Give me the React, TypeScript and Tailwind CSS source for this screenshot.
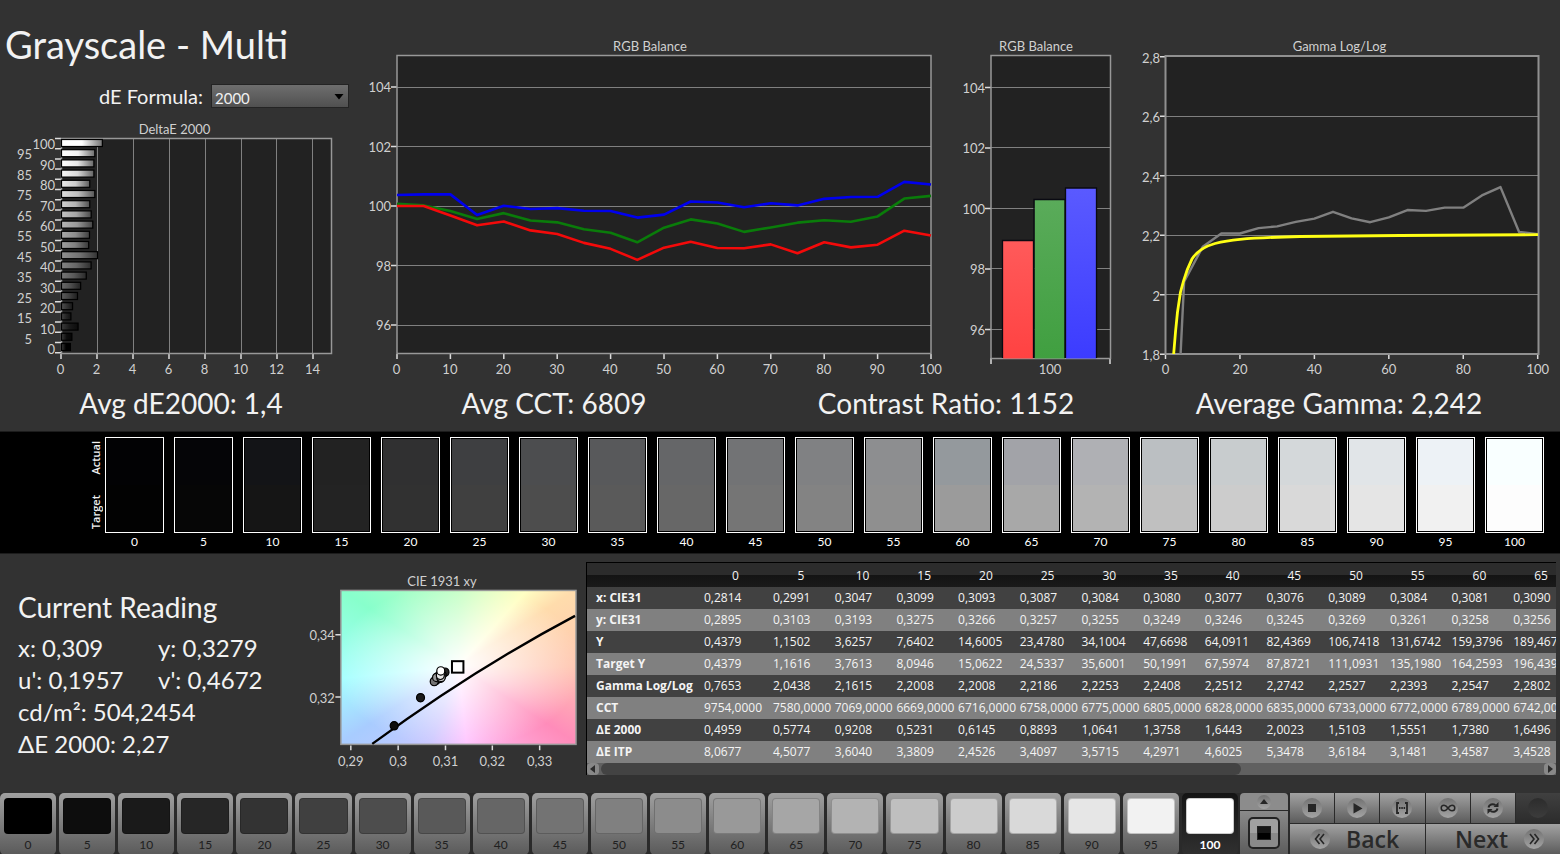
import React from "react";

const LEVELS = Array.from({ length: 21 }, (_, i) => i * 5);

const DELTA_E = [
  0.4959, 0.5774, 0.9208, 0.5231, 0.6145, 0.8893, 1.0641, 1.3758, 1.6443, 2.0023, 1.5103, 1.5551, 1.738, 1.6496, 1.57,
  1.85, 1.57, 1.8, 1.8, 1.85, 2.27,
];

const BLUE = [
  100.37, 100.39, 100.39, 99.7, 100.01, 99.9, 99.93, 99.84, 99.83, 99.61, 99.71, 100.15, 100.12, 99.96, 100.09, 100.02,
  100.24, 100.3, 100.31, 100.81, 100.72,
];
const GREEN = [
  100.07, 100.02, 99.83, 99.56, 99.76, 99.51, 99.45, 99.22, 99.1, 98.78, 99.27, 99.55, 99.41, 99.13, 99.28, 99.44,
  99.52, 99.47, 99.65, 100.25, 100.34,
];
const RED = [
  100, 100, 99.68, 99.35, 99.48, 99.18, 99.06, 98.76, 98.56, 98.19, 98.6, 98.8, 98.59, 98.58, 98.71, 98.41, 98.78,
  98.61, 98.7, 99.17, 99.01,
];

const GAMMA = [
  0.7653, 2.0438, 2.1615, 2.206, 2.206, 2.224, 2.23, 2.245, 2.256, 2.279, 2.257, 2.244, 2.26, 2.285,
  2.282, 2.293, 2.293, 2.334, 2.362, 2.211, 2.204,
];

const ROWS: { label: string; cells: string }[] = [
  { label: "x: CIE31", cells: "0,2814 0,2991 0,3047 0,3099 0,3093 0,3087 0,3084 0,3080 0,3077 0,3076 0,3089 0,3084 0,3081 0,3090" },
  { label: "y: CIE31", cells: "0,2895 0,3103 0,3193 0,3275 0,3266 0,3257 0,3255 0,3249 0,3246 0,3245 0,3269 0,3261 0,3258 0,3256" },
  { label: "Y", cells: "0,4379 1,1502 3,6257 7,6402 14,6005 23,4780 34,1004 47,6698 64,0911 82,4369 106,7418 131,6742 159,3796 189,4679" },
  { label: "Target Y", cells: "0,4379 1,1616 3,7613 8,0946 15,0622 24,5337 35,6001 50,1991 67,5974 87,8721 111,0931 135,1980 164,2593 196,4390" },
  { label: "Gamma Log/Log", cells: "0,7653 2,0438 2,1615 2,2008 2,2008 2,2186 2,2253 2,2408 2,2512 2,2742 2,2527 2,2393 2,2547 2,2802" },
  { label: "CCT", cells: "9754,0000 7580,0000 7069,0000 6669,0000 6716,0000 6758,0000 6775,0000 6805,0000 6828,0000 6835,0000 6733,0000 6772,0000 6789,0000 6742,0000" },
  { label: "ΔE 2000", cells: "0,4959 0,5774 0,9208 0,5231 0,6145 0,8893 1,0641 1,3758 1,6443 2,0023 1,5103 1,5551 1,7380 1,6496" },
  { label: "ΔE ITP", cells: "8,0677 4,5077 3,6040 3,3809 2,4526 3,4097 3,5715 4,2971 4,6025 5,3478 3,6184 3,1481 3,4587 3,4528" },
];

const SWATCHES: [string, string][] = [
  ["#020204", "#020202"], ["#050507", "#060606"], ["#131417", "#151515"], ["#222222", "#232323"],
  ["#303031", "#313131"], ["#3e3f41", "#404040"], ["#4c4d4f", "#4d4d4d"], ["#58595b", "#5a5a5a"],
  ["#656668", "#676767"], ["#727375", "#757575"], ["#808183", "#838383"], ["#8d8e90", "#8f8f8f"],
  ["#94999d", "#9b9b9b"], ["#a2a3a8", "#a8a8a8"], ["#afb0b4", "#b3b3b3"], ["#bbbfc2", "#c0c0c0"],
  ["#c8ccce", "#cccccc"], ["#d4d8da", "#d9d9d9"], ["#e1e5e8", "#e5e5e5"], ["#edf2f6", "#f1f1f1"],
  ["#f9ffff", "#fdfdfd"],
];

const grayOf = (level: number) => {
  const v = Math.round((level / 100) * 255);
  return `rgb(${v},${v},${v})`;
};

type LabelProps = { x: number; y: number; anchor?: "start" | "middle" | "end"; children: React.ReactNode };

function AxisText({ x, y, anchor = "middle", children }: LabelProps) {
  return (
    <text x={x} y={y + 5} textAnchor={anchor} fontSize="13" fill="#d0d0d0">
      {children}
    </text>
  );
}

function Grid({ d }: { d: string }) {
  return <path d={d} stroke="#808080" fill="none" shapeRendering="crispEdges" />;
}

function Ticks({ d }: { d: string }) {
  return <path d={d} stroke="#dcdcdc" strokeWidth="1.5" fill="none" />;
}

function Frame({ x, y, w, h }: { x: number; y: number; w: number; h: number }) {
  return <rect x={x} y={y} width={w} height={h} fill="none" stroke="#989898" strokeWidth="1.5" />;
}

function DeltaChart() {
  const xs = [0, 2, 4, 6, 8, 10, 12, 14];
  return (
    <svg viewBox="0 118 360 267" className="block w-full" role="img" aria-label="DeltaE 2000">
      <defs>
        {LEVELS.map((l) => {
          const lit = Math.max(60, l * 2.55 + 30);
          return (
            <linearGradient key={l} id={`de${l}`}>
              <stop offset="0" stopColor={l > 85 ? "#fff" : `rgb(${lit},${lit},${lit})`} />
              <stop offset="0.5" stopColor={grayOf(l)} />
              <stop offset="1" stopColor={grayOf(l * 0.45)} />
            </linearGradient>
          );
        })}
      </defs>
      <AxisText x={174.5} y={129}>DeltaE 2000</AxisText>
      <rect x="61" y="138" width="270" height="215" fill="#222" />
      <Grid d={xs.slice(1).map((v) => `M${Math.round(61 + v * 17.95) + 0.5} 138V353`).join("")} />
      <Ticks d={xs.map((v) => `M${61 + v * 18} 354v5`).join("") + Array.from({ length: 22 }, (_, k) => `M55 ${138.5 + k * 10.2}h6`).join("")} />
      <Frame x={61.5} y={138.5} w={270} h={215} />
      {LEVELS.map((l, i) => (
        <rect key={l} x="61.5" y={343.5 - i * 10.2} width={DELTA_E[i] * 18} height="7" fill={`url(#de${l})`} stroke="#000" strokeWidth="1.2" />
      ))}
      {LEVELS.map((l, i) => (
        <AxisText key={l} x={i % 2 ? 32 : 55} y={349 - i * 10.25} anchor="end">{l}</AxisText>
      ))}
      {xs.map((v) => (
        <AxisText key={v} x={60.5 + v * 18} y={369}>{v}</AxisText>
      ))}
    </svg>
  );
}

function RgbLineChart() {
  const px = (i: number) => 397 + i * 26.7;
  const py = (v: number) => 206 - (v - 100) * 29.75;
  const line = (data: number[]) => data.map((v, i) => `${px(i)},${py(v)}`).join(" ");
  const ys = [96, 98, 100, 102, 104];
  const xs = Array.from({ length: 11 }, (_, i) => i * 10);
  return (
    <svg viewBox="360 35 590 350" className="block w-full" role="img" aria-label="RGB Balance by level">
      <AxisText x={650} y={46}>RGB Balance</AxisText>
      <rect x="397" y="56" width="534" height="298" fill="#222" />
      <Grid d={ys.map((v) => `M397 ${Math.floor(py(v)) + 0.5}H931`).join("")} />
      <Ticks d={ys.map((v) => `M391 ${py(v)}h6`).join("") + xs.map((v) => `M${397 + v * 5.34} 354v5`).join("")} />
      <Frame x={397} y={55.5} w={534} h={298} />
      <g fill="none" strokeWidth="2.6" strokeLinejoin="round">
        <polyline points={line(BLUE)} stroke="#0000ee" />
        <polyline points={line(GREEN)} stroke="#0a7c0a" />
        <polyline points={line(RED)} stroke="#f40a0a" />
      </g>
      {ys.map((v) => (
        <AxisText key={v} x={391} y={py(v)} anchor="end">{v}</AxisText>
      ))}
      {xs.map((v) => (
        <AxisText key={v} x={396.5 + v * 5.34} y={369}>{v}</AxisText>
      ))}
    </svg>
  );
}

function RgbBarChart() {
  const py = (v: number) => 208.5 - (v - 100) * 30.25;
  const ys = [96, 98, 100, 102, 104];
  const bars = [
    { x: 1003, top: 240.5, from: "#ff5a5a", to: "#ff4242" },
    { x: 1034.5, top: 199.5, from: "#5aab5a", to: "#409f40" },
    { x: 1066, top: 188, from: "#5a5aff", to: "#3c3cff" },
  ];
  return (
    <svg viewBox="950 35 175 350" className="block w-full" role="img" aria-label="RGB Balance at level 100">
      <defs>
        {bars.map((b) => (
          <linearGradient key={b.x} id={`bar${b.x}`} x1="0" y1="0" x2="0" y2="1">
            <stop offset="0" stopColor={b.from} />
            <stop offset="1" stopColor={b.to} />
          </linearGradient>
        ))}
      </defs>
      <AxisText x={1036} y={46}>RGB Balance</AxisText>
      <rect x="991" y="56" width="119" height="302" fill="#222" />
      <Grid d={ys.map((v) => `M991 ${Math.floor(py(v) - 0.3) + 0.5}H1110`).join("")} />
      <Ticks d={ys.map((v) => `M985 ${py(v)}h6`).join("") + "M991 358v6M1110 358v6"} />
      <Frame x={991} y={55.5} w={119.5} h={303} />
      {bars.map((b) => (
        <g key={b.x}>
          <rect x={b.x} y={b.top} width="30.5" height={358.5 - b.top} fill={`url(#bar${b.x})`} />
          <path d={`M${b.x - 0.5} 358V${b.top}h31V358`} fill="none" stroke="#0a0a12" strokeWidth="1.3" />
        </g>
      ))}
      {ys.map((v) => (
        <AxisText key={v} x={985} y={py(v)} anchor="end">{v}</AxisText>
      ))}
      <AxisText x={1050} y={369}>100</AxisText>
    </svg>
  );
}

function GammaChart() {
  const px = (v: number) => 1165.5 + v * 3.722;
  const py = (v: number) => 235.3 - (v - 2.2) * 297.5;
  const ys: [number, string][] = [[2.8, "2,8"], [2.6, "2,6"], [2.4, "2,4"], [2.2, "2,2"], [2, "2"], [1.8, "1,8"]];
  const xs = [0, 20, 40, 60, 80, 100];
  return (
    <svg viewBox="1125 35 435 350" className="block w-full" role="img" aria-label="Gamma Log/Log">
      <clipPath id="gamma-plot">
        <rect x="1166" y="56" width="372" height="298" />
      </clipPath>
      <AxisText x={1339.5} y={46}>Gamma Log/Log</AxisText>
      <rect x="1166" y="56" width="372" height="298" fill="#222" />
      <Grid d={[2.6, 2.4, 2.2, 2].map((v) => `M1166 ${Math.floor(py(v)) + 0.5}H1538`).join("")} />
      <Ticks d={ys.map(([v]) => `M1160 ${py(v)}h6`).join("") + xs.map((v) => `M${px(v)} 354v5`).join("")} />
      <rect x="1165.5" y="56" width="373" height="298" fill="none" stroke="#909090" strokeWidth="2" />
      <g clipPath="url(#gamma-plot)" fill="none" strokeLinejoin="round">
        <polyline points={GAMMA.map((v, i) => `${px(i * 5)},${py(v)}`).join(" ")} stroke="#808080" strokeWidth="2.4" />
        <path
          d="M1173.5 356L1175.5 332L1177.5 312L1180.5 292L1183.5 281Q1187 269 1192 259Q1199 248 1215 243.500Q1226 240.500 1240 239.300Q1262 237.500 1300 236.500L1400 235.500L1538 234.700"
          stroke="#ffff14"
          strokeWidth="2.8"
        />
      </g>
      {ys.map(([v, t]) => (
        <AxisText key={t} x={1160} y={py(v) + 1} anchor="end">{t}</AxisText>
      ))}
      {xs.map((v) => (
        <AxisText key={v} x={px(v)} y={369}>{v}</AxisText>
      ))}
    </svg>
  );
}

const CIE_POINTS: [number, number, string][] = [
  [0.2991, 0.3103, "#0d0d0d"], [0.3047, 0.3193, "#1a1a1a"], [0.3099, 0.3275, "#262626"], [0.3093, 0.3266, "#333"],
  [0.3087, 0.3257, "#404040"], [0.3084, 0.3255, "#4d4d4d"], [0.308, 0.3249, "#595959"], [0.3077, 0.3246, "#666"],
  [0.3076, 0.3245, "#737373"], [0.3089, 0.3269, "#808080"], [0.3084, 0.3261, "#8c8c8c"], [0.3081, 0.3258, "#999"],
  [0.309, 0.3256, "#a6a6a6"], [0.3091, 0.3258, "#ccc"], [0.3089, 0.3265, "#e6e6e6"], [0.309, 0.3279, "#fff"],
];

function CieChart() {
  const xs: [number, string][] = [[351, "0,29"], [398.5, "0,3"], [446, "0,31"], [493, "0,32"], [540.5, "0,33"]];
  return (
    <svg viewBox="300 570 287 205" className="block w-full" role="img" aria-label="CIE 1931 xy">
      <AxisText x={442.5} y={581}>CIE 1931 xy</AxisText>
      <foreignObject x="341" y="591" width="236" height="154">
        <div className="h-full w-full bg-[radial-gradient(ellipse_farthest-side_at_50%_49%,#fff_0%,#fffc_22%,#fff0_105%),conic-gradient(from_0deg_at_50%_49%,#c4ffc4_0deg,#ffffc4_42deg,#ffdcac_57deg,#ffc6b0_90deg,#ff8cba_123deg,#ffa8dc_148deg,#ffc4ff_174deg,#ccc8ff_200deg,#a8ccff_237deg,#a4ffff_264deg,#88ffcc_303deg,#a4ffc8_325deg,#c4ffc4_360deg)]" />
      </foreignObject>
      <Frame x={341} y={590.5} w={236} h={154.5} />
      <Ticks d={xs.map(([x]) => `M${x} 746v5`).join("") + "M335.500 635h5.500M335.500 697.500h5.500"} />
      <path d="M372.500 744.500Q474 670 576 616" stroke="#000" strokeWidth="2.4" fill="none" />
      {CIE_POINTS.map(([x, y, fill]) => (
        <ellipse key={`${x}-${y}-${fill}`} cx={351.5 + (x - 0.29) * 4725} cy={633.5 + (0.34 - y) * 3125} rx="4" ry="4.200" fill={fill} stroke="#000" strokeWidth="1.200" />
      ))}
      <rect x="452.500" y="661.500" width="11.500" height="11.500" fill="#fff" stroke="#000" strokeWidth="2" />
      {xs.map(([x, t]) => (
        <AxisText key={t} x={x} y={761.5}>{t}</AxisText>
      ))}
      <AxisText x={335} y={635.5} anchor="end">0,34</AxisText>
      <AxisText x={335} y={698} anchor="end">0,32</AxisText>
    </svg>
  );
}

function ReadingsTable() {
  return (
    <div className="mr-1 mt-2 min-w-0 flex-1 self-start overflow-hidden border-t border-l border-black font-['Open_Sans','Noto_Sans',sans-serif] text-[12px] leading-4 text-[#f4f4f4]">
      <table className="w-[985px] table-fixed border-collapse">
        <colgroup>
          <col className="w-[114px]" />
          <col className="w-[69px]" />
        </colgroup>
        <thead>
          <tr className="h-6 bg-[linear-gradient(#2c2c2c_0%,#2c2c2c_50%,#141414_52%,#1a1a1a_100%)]">
            <th aria-label="Quantity" />
            {LEVELS.slice(0, 14).map((l) => (
              <th key={l} scope="col" className="p-0 pt-0.5 text-center font-normal">{l}</th>
            ))}
          </tr>
        </thead>
        <tbody>
          {ROWS.map((row) => (
            <tr key={row.label} className="h-[22px] odd:bg-[#414141] even:bg-[#808080]">
              <th scope="row" className="p-0 pl-[9px] text-left font-bold whitespace-nowrap">{row.label}</th>
              {row.cells.split(" ").map((c, i) => (
                <td key={i} className="p-0 pl-[3px] whitespace-nowrap">{c}</td>
              ))}
            </tr>
          ))}
        </tbody>
      </table>
      <div className="flex h-3 items-center bg-[#606060]">
        <button type="button" aria-label="Scroll left" className="flex h-3 w-3 items-center justify-center rounded-sm bg-[#888]">
          <svg viewBox="0 0 6 8" className="h-2 w-1.5" fill="#2c2c2c"><path d="M5 0v8L0 4z" /></svg>
        </button>
        <div className="mx-0.5 flex-1">
          <div className="h-3 w-[68%] rounded-md bg-[#434343]" />
        </div>
        <button type="button" aria-label="Scroll right" className="flex h-3 w-3 items-center justify-center rounded-sm bg-[#888]">
          <svg viewBox="0 0 6 8" className="h-2 w-1.5" fill="#2c2c2c"><path d="M1 0v8l5-4z" /></svg>
        </button>
      </div>
    </div>
  );
}

function Round({ children, size = "h-5 w-5" }: { children?: React.ReactNode; size?: string }) {
  return (
    <span className={`flex ${size} shrink-0 items-center justify-center rounded-full bg-[linear-gradient(#727272,#a4a4a4)]`}>
      {children}
    </span>
  );
}

const CONTROLS: { label: string; icon: React.ReactNode }[] = [
  { label: "Stop", icon: <path d="M6 6h8v8H6z" fill="#262626" /> },
  { label: "Play", icon: <path d="M6.500 5L15.500 10.500L6.500 15.500z" fill="#262626" /> },
  {
    label: "Measure range",
    icon: (
      <>
        <path d="M7 5H5v10h2M13 5h2v10h-2" fill="none" stroke="#262626" strokeWidth="1.800" />
        <path d="M7 10h1.500M9.300 10h1.500M11.600 10h1.500" stroke="#262626" strokeWidth="1.800" />
      </>
    ),
  },
  {
    label: "Continuous",
    icon: (
      <path
        d="M10 10C8.500 8 7.500 7.200 6 7.200a2.800 2.800 0 0 0 0 5.600C7.500 12.800 8.500 12 10 10S12.500 7.200 14 7.200a2.800 2.800 0 0 1 0 5.600C12.500 12.800 11.500 12 10 10z"
        fill="none"
        stroke="#262626"
        strokeWidth="1.500"
      />
    ),
  },
  {
    label: "Refresh",
    icon: (
      <g fill="none" stroke="#262626" strokeWidth="2">
        <path d="M5.500 9.500C6 6.500 9.500 5.200 12.500 7" />
        <path d="M14.500 10.500C14 13.500 10.500 14.800 7.500 13" />
        <path d="M15.500 4v5h-5zM4.500 16v-5h5z" fill="#262626" stroke="none" />
      </g>
    ),
  },
];

const KEY = "bg-[linear-gradient(#a2a2a2,#5c5c5c)]";

export default function App() {
  return (
    <main className="flex min-h-screen flex-col overflow-hidden bg-[#323232] font-[Lato,'Open_Sans',sans-serif] text-[#f2f2f2]">
      <section className="grid grid-cols-[360fr_590fr_175fr_435fr] items-end">
        <div>
          <h1 className="mt-5 pl-[5px] text-[38px] leading-[48px] whitespace-nowrap">Grayscale - Multi</h1>
          <div className="mt-4 mb-[10px] flex items-center justify-end gap-2 pr-[11px]">
            <label htmlFor="formula" className="text-[20px] leading-6">dE Formula:</label>
            <span className="relative flex">
              <select
                id="formula"
                className="h-6 w-[138px] appearance-none border border-[#242424] bg-[linear-gradient(#6e6e6e,#505050)] pt-[3px] pl-[3px] text-[15px] leading-5 text-[#f0f0f0]"
                defaultValue="2000"
              >
                <option value="2000">2000</option>
              </select>
              <svg viewBox="0 0 10 6" className="pointer-events-none absolute top-[10px] right-[5px] h-[6px] w-[10px]">
                <path d="M0.500 0h9L5 5.500z" fill="#000" />
              </svg>
            </span>
          </div>
          <DeltaChart />
        </div>
        <RgbLineChart />
        <RgbBarChart />
        <GammaChart />
      </section>

      <section className="grid h-[46px] grid-cols-[362fr_384fr_400fr_386fr_28fr] text-center text-[28px] leading-9 whitespace-nowrap">
        <p>Avg dE2000: 1,4</p>
        <p>Avg CCT: 6809</p>
        <p>Contrast Ratio: 1152</p>
        <p>Average Gamma: 2,242</p>
      </section>

      <section className="flex h-[123px] border-y border-[#1c1c1c] bg-black pt-[5px] pr-4 text-[12px]">
        <div className="flex h-24 w-[105px] flex-col items-end justify-between pt-1 pr-0.5 pb-1 font-['Open_Sans',sans-serif] text-[11px] leading-[14px] font-semibold">
          <span className="rotate-180 [writing-mode:vertical-rl]">Actual</span>
          <span className="rotate-180 [writing-mode:vertical-rl]">Target</span>
        </div>
        <ul className="grid flex-1 grid-cols-21 gap-[10px]">
          {LEVELS.map((l, i) => (
            <li key={l} className="text-center">
              <div className="flex h-24 flex-col border border-white">
                <div className="flex flex-1 flex-col border border-black/20">
                  <span className="flex-1" style={{ background: SWATCHES[i][0] }} />
                  <span className="flex-1" style={{ background: SWATCHES[i][1] }} />
                </div>
              </div>
              <span className="block leading-[18px] text-white">{l}</span>
            </li>
          ))}
        </ul>
      </section>

      <section className="flex flex-1">
        <div className="w-[300px] pt-[35px] pl-[18px] text-[24px] leading-8 whitespace-nowrap">
          <h2 className="mb-[7px] text-[28px] leading-9">Current Reading</h2>
          <dl className="grid grid-cols-[140px_1fr]">
            <div>x: 0,309</div>
            <div>y: 0,3279</div>
            <div>u': 0,1957</div>
            <div>v': 0,4672</div>
            <div className="col-span-2">cd/m²: 504,2454</div>
            <div className="col-span-2">ΔE 2000: 2,27</div>
          </dl>
        </div>
        <div className="w-[286px] pt-4">
          <CieChart />
        </div>
        <ReadingsTable />
      </section>

      <footer className="flex h-[61px] bg-[#2a2a2a]">
        <div className="grid flex-1 grid-cols-21 gap-[3px]">
          {LEVELS.map((l) => {
            const on = l === 100;
            return (
              <button
                key={l}
                type="button"
                aria-pressed={on}
                className={`flex flex-col items-center rounded-[5px] px-1 pt-[5px] text-[12px] ${
                  on ? "bg-[linear-gradient(#141414,#303030)] font-bold text-white" : "bg-[linear-gradient(#a0a0a0,#5a5a5a)] text-[#202020]"
                }`}
              >
                <span className="block h-9 w-full rounded-[4px] border border-black/20" style={{ background: grayOf(l) }} />
                <span className="leading-[21px]">{l}</span>
              </button>
            );
          })}
        </div>
        <div className="mx-[2px] grid w-12 grid-rows-[17px_1fr] gap-px">
          <button type="button" aria-label="Expand" className="flex items-center justify-center rounded-t bg-[#8c8c8c]">
            <Round size="h-3.5 w-3.5">
              <svg viewBox="0 0 8 5" className="h-[5px] w-2"><path d="M0 5L4 0L8 5z" fill="#262626" /></svg>
            </Round>
          </button>
          <button type="button" aria-label="Pattern window" className="flex items-center justify-center bg-[linear-gradient(#8a8a8a,#5c5c5c)]">
            <span className="flex h-8 w-8 items-center justify-center rounded-[5px] border-2 border-[#222] bg-[linear-gradient(#a0a0a0_50%,#8a8a8a_50%)]">
              <span className="h-[14px] w-[14px] border border-[#222] bg-[linear-gradient(#181818_50%,#000_50%)]" />
            </span>
          </button>
        </div>
        <div className="grid w-[270px] grid-rows-[30px_30px] gap-px">
          <div className="grid grid-cols-6 gap-px">
            {CONTROLS.map((c) => (
              <button key={c.label} type="button" aria-label={c.label} className={`flex items-center justify-center ${KEY}`}>
                <Round>
                  <svg viewBox="0 0 20 20" className="h-5 w-5">{c.icon}</svg>
                </Round>
              </button>
            ))}
            <button type="button" aria-label="Record" className="flex items-center justify-center bg-[linear-gradient(#404040,#2c2c2c)]">
              <span className="h-5 w-5 rounded-full bg-[linear-gradient(#2c2c2c,#3c3c3c)]" />
            </button>
          </div>
          <div className="grid grid-cols-2 gap-px font-['Open_Sans',sans-serif] text-[23px] leading-[30px] font-semibold text-[#2a2a2a]">
            <button type="button" className={`flex items-center gap-4 pl-5 ${KEY}`}>
              <Round>
                <svg viewBox="0 0 20 20" className="h-5 w-5" fill="none" stroke="#262626" strokeWidth="1.600">
                  <path d="M9.500 5L5.500 10l4 5M14 5l-4 5l4 5" />
                </svg>
              </Round>
              Back
            </button>
            <button type="button" className={`flex items-center justify-end gap-4 pr-4 ${KEY}`}>
              Next
              <Round>
                <svg viewBox="0 0 20 20" className="h-5 w-5" fill="none" stroke="#262626" strokeWidth="1.600">
                  <path d="M6 5l4 5l-4 5M10.500 5l4 5l-4 5" />
                </svg>
              </Round>
            </button>
          </div>
        </div>
      </footer>
    </main>
  );
}
